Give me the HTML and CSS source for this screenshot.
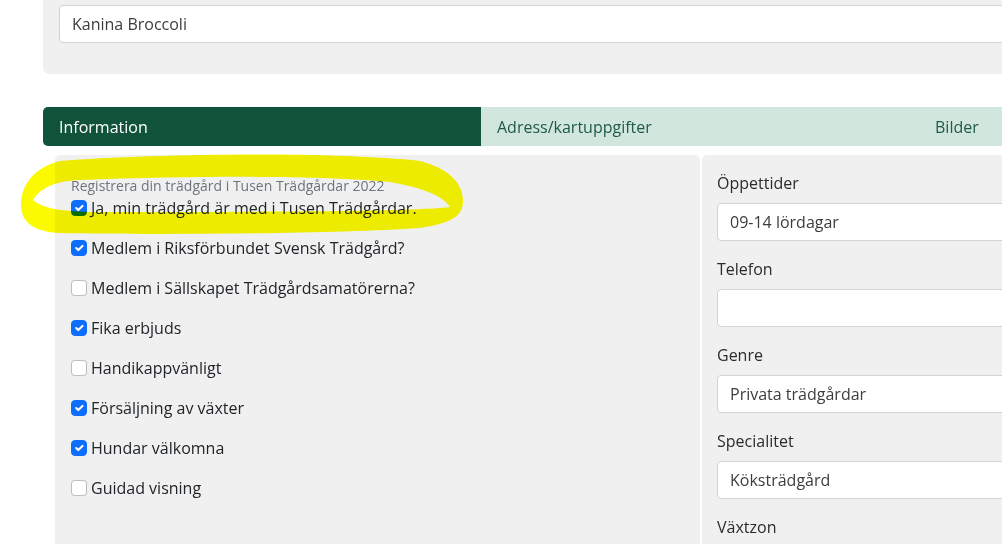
FILE: index.html
```html
<!DOCTYPE html>
<html lang="sv">
<head>
<meta charset="utf-8">
<title>Trädgård</title>
<link rel="stylesheet" href="styles.css">
</head>
<body>
<div class="page">
  <section class="top-panel">
    <div class="field-input wide">Kanina Broccoli</div>
  </section>

  <nav class="tabs">
    <div class="tab active">Information</div>
    <div class="tab">Adress/kartuppgifter</div>
    <div class="tab">Bilder</div>
  </nav>

  <div class="content">
    <div class="left-panel">
      <div class="hint">Registrera din trädgård i Tusen Trädgårdar 2022</div>
      <div class="check first"><span class="cb on"><svg viewBox="0 0 20 20"><path d="M6 10l3 3l6-6"/></svg></span>Ja, min trädgård är med i Tusen Trädgårdar.</div>
      <div class="check"><span class="cb on"><svg viewBox="0 0 20 20"><path d="M6 10l3 3l6-6"/></svg></span>Medlem i Riksförbundet Svensk Trädgård?</div>
      <div class="check"><span class="cb"></span>Medlem i Sällskapet Trädgårdsamatörerna?</div>
      <div class="check"><span class="cb on"><svg viewBox="0 0 20 20"><path d="M6 10l3 3l6-6"/></svg></span>Fika erbjuds</div>
      <div class="check"><span class="cb"></span>Handikappvänligt</div>
      <div class="check"><span class="cb on"><svg viewBox="0 0 20 20"><path d="M6 10l3 3l6-6"/></svg></span>Försäljning av växter</div>
      <div class="check"><span class="cb on"><svg viewBox="0 0 20 20"><path d="M6 10l3 3l6-6"/></svg></span>Hundar välkomna</div>
      <div class="check"><span class="cb"></span>Guidad visning</div>
    </div>
    <div class="right-panel">
      <div class="field"><div class="label">Öppettider</div><div class="field-input">09-14 lördagar</div></div>
      <div class="field"><div class="label">Telefon</div><div class="field-input"></div></div>
      <div class="field"><div class="label">Genre</div><div class="field-input">Privata trädgårdar</div></div>
      <div class="field"><div class="label">Specialitet</div><div class="field-input">Köksträdgård</div></div>
      <div class="field"><div class="label">Växtzon</div><div class="field-input"></div></div>
    </div>
  </div>
</div>

<svg class="highlight" width="1002" height="544" viewBox="0 0 1002 544">
  <path fill-rule="evenodd" d="M60 161 C150 154 330 151 420 161 C447 168 463 182 463 201 C463 216 452 223 420 228 C330 234 150 235 60 233 C34 232 21 222 21 205 C21 184 35 167 60 161 Z M33 200 C40 188 55 181 80 180 C200 176 320 175 390 182 C425 188 444 197 450 207 C420 211 300 212 100 212 C60 212 42 208 33 200 Z"/>
</svg>
</body>
</html>
```

FILE: styles.css
```css
html, body {
  margin: 0;
  padding: 0;
  width: 1002px;
  height: 544px;
  overflow: hidden;
  background: #ffffff;
  font-family: "Open Sans", "Noto Sans", sans-serif;
  font-size: 16px;
  color: #212529;
}

.page {
  padding-left: 43px;
  width: 1300px;
}

.top-panel {
  background: #f0f0f0;
  border-radius: 0 0 0 6px;
  padding: 5px 0 31px 16px;
}

.field-input {
  box-sizing: border-box;
  height: 38px;
  background: #ffffff;
  border: 1px solid #ced4da;
  border-radius: 4px;
  padding: 0 12px;
  line-height: 36px;
  color: #3d3d3d;
}

.field-input.wide {
  width: 1100px;
}

.tabs {
  display: flex;
  margin-top: 33px;
  height: 39px;
  background: #d1e6dc;
  border-radius: 5px 0 0 5px;
}

.tab {
  box-sizing: border-box;
  width: 438px;
  flex: none;
  padding: 1px 16px 0;
  line-height: 38px;
  color: #205a4c;
}

.tab.active {
  background: #11533a;
  color: #ffffff;
  border-radius: 5px 0 0 5px;
}

.content {
  display: flex;
  gap: 2px;
  margin-top: 9px;
  margin-left: 12px;
  height: 400px;
}

.left-panel {
  width: 645px;
  background: #f0f0f0;
  border-radius: 5px 5px 0 0;
  padding: 21px 16px 0;
  box-sizing: border-box;
}

.hint {
  font-size: 14px;
  line-height: 20px;
  color: #6c757d;
}

.check {
  display: flex;
  align-items: center;
  height: 24px;
  line-height: 24px;
  margin-bottom: 16px;
}

.cb {
  box-sizing: border-box;
  width: 16px;
  height: 16px;
  flex: none;
  margin-right: 4px;
  border: 1px solid rgba(0, 0, 0, 0.25);
  border-radius: 4px;
  background: #ffffff;
  display: flex;
}

.cb.on {
  background: #0d6efd;
  border-color: #0d6efd;
}

.cb svg {
  width: 14px;
  height: 14px;
  fill: none;
  stroke: #ffffff;
  stroke-width: 3;
  stroke-linecap: round;
  stroke-linejoin: round;
}

.right-panel {
  width: 500px;
  background: #f0f0f0;
  border-radius: 5px 5px 0 0;
  padding: 16px 0 0 15px;
  box-sizing: border-box;
}

.field {
  margin-bottom: 16px;
}

.label {
  line-height: 24px;
  margin-bottom: 8px;
  color: #2b2b2b;
}

.highlight {
  position: absolute;
  left: 0;
  top: 0;
  pointer-events: none;
  mix-blend-mode: multiply;
}

.highlight path {
  fill: #fcfa00;
}
```
